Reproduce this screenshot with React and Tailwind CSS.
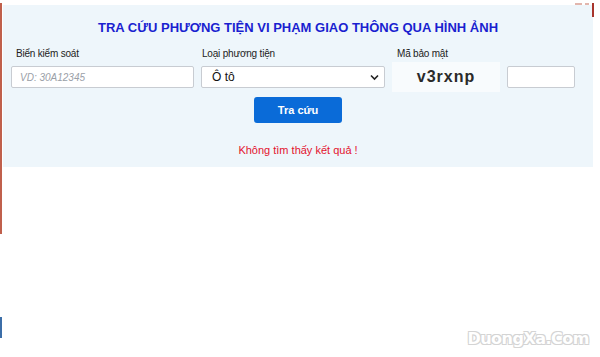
import React from "react";

const App = () => {
  return (
    <div className="relative flex h-[357px] w-[600px] overflow-hidden bg-white font-['Liberation_Sans',Arial,sans-serif]">
      {/* left edge strip */}
      <div className="flex w-[3px] shrink-0 flex-col">
        <div className="mt-[3px] h-[231px] w-[2px] bg-[#c0604c]" />
        <div className="mt-[83px] h-[21px] w-[2px] bg-[#3c6ea8]" />
      </div>

      <div className="flex-1 pt-[5px] pr-[7px]">
        <div className="flex h-[162px] flex-col bg-[#eef6fb] px-[8px]">
          <h1 className="mt-[15px] text-center text-[13px] leading-[16px] font-bold text-[#1a1fd0]">
            TRA CỨU PHƯƠNG TIỆN VI PHẠM GIAO THÔNG QUA HÌNH ẢNH
          </h1>

          <div className="mt-[11px] grid grid-cols-[183px_184px_183px] gap-x-[7px]">
            <div>
              <label className="block pl-[5px] text-[10px] leading-[13px] tracking-[-0.2px] text-[#222]">Biển kiểm soát</label>
              <input
                type="text"
                placeholder="VD: 30A12345"
                className="mt-[6px] h-[22px] w-full rounded-[2px] border border-[#c8ccd2] bg-white px-[8px] text-[10px] italic text-[#333] placeholder:text-[#9aa0a8]"
              />
            </div>
            <div>
              <label className="block pl-[1px] text-[10px] leading-[13px] tracking-[-0.2px] text-[#222]">Loại phương tiện</label>
              <div className="relative mt-[6px] flex h-[22px] items-center rounded-[2px] border border-[#c8ccd2] bg-white px-[10px] text-[12px] text-[#111]">
                Ô tô
                <svg className="absolute right-[5px] top-[7px]" width="9" height="7" viewBox="0 0 9 7">
                  <path d="M1 1.5 L4.5 5 L8 1.5" fill="none" stroke="#222" strokeWidth="1.6" />
                </svg>
              </div>
            </div>
            <div>
              <label className="block pl-[5px] text-[10px] leading-[13px] tracking-[-0.2px] text-[#222]">Mã bảo mật</label>
              <div className="mt-[2px] flex items-center justify-between">
                <div className="flex h-[30px] w-[108px] items-center justify-center bg-[#f8fbfd] text-[16px] font-bold tracking-[1px] text-[#2a2a2a]">
                  v3rxnp
                </div>
                <input
                  type="text"
                  className="h-[22px] w-[68px] rounded-[2px] border border-[#c8ccd2] bg-white"
                />
              </div>
            </div>
          </div>

          <div className="mt-[5px] flex justify-center">
            <button className="h-[26px] w-[88px] rounded-[3px] bg-[#0a6bd8] text-[11px] font-bold text-white">
              Tra cứu
            </button>
          </div>

          <p className="mt-[20px] text-center text-[11px] leading-[14px] text-[#e3122e]">Không tìm thấy kết quả !</p>
        </div>
      </div>

      {/* corner mark */}
      <svg className="absolute right-[4px] top-[2px]" width="22" height="16" viewBox="0 0 22 16">
        <path d="M1 2 H8 M11 2 H15" stroke="#c0604c" strokeWidth="1.4" opacity="0.6" />
        <path d="M19 1 V15" stroke="#a8342c" strokeWidth="2" />
      </svg>

      {/* watermark */}
      <div className="absolute bottom-[6px] right-[11px] font-['DejaVu_Sans',sans-serif] text-[16px] font-bold tracking-[-0.5px] text-white [text-shadow:-1px_-1px_0_#d4d4d4,1px_-1px_0_#d4d4d4,-1px_1px_0_#d4d4d4,1px_1px_0_#d4d4d4]">
        DuongXa.Com
      </div>
    </div>
  );
};

export default App;
